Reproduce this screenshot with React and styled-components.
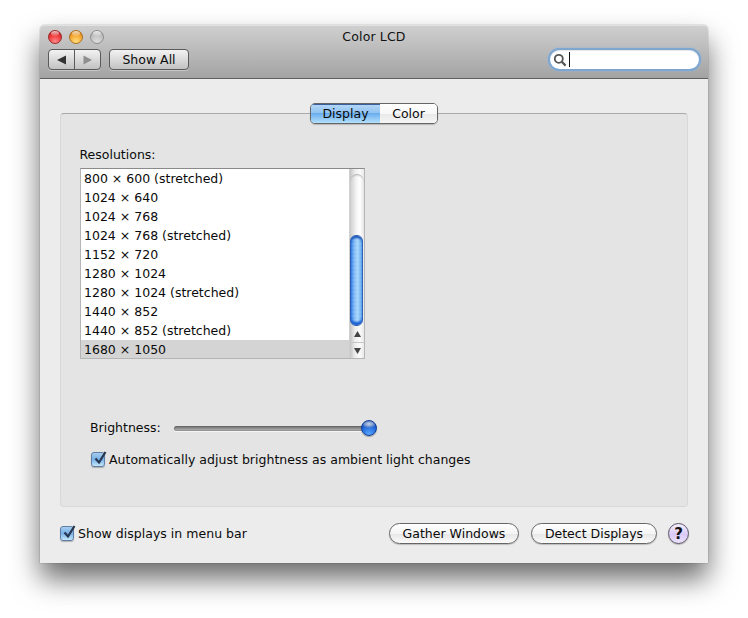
import React from 'react';
import styled, { createGlobalStyle } from 'styled-components';

const Global = createGlobalStyle`
  html, body { margin: 0; padding: 0; background: #fff; }
  body { font-family: "DejaVu Sans", "Liberation Sans", sans-serif; font-size: 12.5px; color: #0a0a0a; }
`;
const Page = styled.div`
  width: 748px; height: 618px; padding: 25px 40px 0; box-sizing: border-box; overflow: hidden;
`;
const Window = styled.div`
  width: 668px; height: 538px; display: flex; flex-direction: column; background: #ececec;
  border-radius: 5px 5px 0 0;
  box-shadow: 0 0 1px rgba(0,0,0,.7), 0 16px 28px rgba(0,0,0,.58);
`;
const TitleBar = styled.div`
  height: 54px; flex: none; box-sizing: border-box; padding: 4px 8px 0;
  display: flex; flex-direction: column; gap: 6px;
  background: linear-gradient(#d0d0d0, #a3a3a3); border-bottom: 1px solid #5f5f5f;
  border-radius: 5px 5px 0 0; box-shadow: inset 0 1px 0 #e2e2e2;
`;
const TitleRow = styled.div`
  height: 14px; display: grid; grid-template-columns: 1fr auto 1fr; align-items: center;
`;
const Lights = styled.div` display: flex; gap: 7px; `;
const Light = styled.span`
  position: relative; width: 14px; height: 14px; border-radius: 50%; box-sizing: border-box;
  border: 1px solid ${p => p.$edge};
  background: radial-gradient(circle at 50% 90%, ${p => p.$glow} 0, ${p => p.$mid} 55%, ${p => p.$dark} 100%);
  &::before {
    content: ""; position: absolute; left: 2px; right: 2px; top: 0; height: 5px; border-radius: 50%;
    background: linear-gradient(rgba(255,255,255,.75), rgba(255,255,255,.1));
  }
`;
const Title = styled.div` font-size: 12.5px; color: #111; letter-spacing: .15px; `;
const ToolRow = styled.div` display: flex; align-items: center; gap: 8px; height: 21px; `;
const NavGroup = styled.div`
  display: flex; width: 53px; height: 21px; box-sizing: border-box; border: 1px solid #5a5a5a; border-radius: 4px;
  background: linear-gradient(#f3f3f3, #c2c2c2); box-shadow: 0 1px 0 rgba(255,255,255,.35);
`;
const NavCell = styled.div`
  flex: 1; display: flex; align-items: center; justify-content: center;
  & + & { border-left: 1px solid #5a5a5a; }
`;
const ToolButton = styled.button`
  width: 80px; height: 21px; padding: 0; box-sizing: border-box; border: 1px solid #5a5a5a; border-radius: 4px;
  background: linear-gradient(#f3f3f3, #c2c2c2); box-shadow: 0 1px 0 rgba(255,255,255,.35);
  font: inherit; color: #0a0a0a;
`;
const Search = styled.div`
  margin-left: auto; margin-right: -1px; width: 153px; height: 23px; box-sizing: border-box; padding-left: 3px;
  display: flex; align-items: center; gap: 2px; background: #fff; border-radius: 12px;
  border: 2px solid #7da7d1; box-shadow: 0 0 2px #8db5dc, inset 0 1px 1px rgba(0,0,0,.1);
`;
const Caret = styled.span` width: 1px; height: 15px; background: #111; `;
const Content = styled.div`
  flex: 1; display: flex; flex-direction: column; padding: 34px 20px 0;
`;
const Panel = styled.div`
  height: 394px; flex: none; box-sizing: border-box; background: #e4e4e4;
  border: 1px solid #d8d8d8; border-top-color: #a9a9a9; border-radius: 4px;
  display: flex; flex-direction: column;
`;
const Tabs = styled.div`
  align-self: center; margin-top: -11px; display: flex; width: 128px; height: 21px; box-sizing: border-box;
  border: 1px solid #666; border-radius: 5px; overflow: hidden; box-shadow: 0 1px 1px rgba(0,0,0,.2);
`;
const Tab = styled.div`
  display: flex; align-items: center; justify-content: center; flex: none; width: ${p => p.$w}px;
  background: ${p => p.$active
    ? 'linear-gradient(#b7d8f7 0, #8fc2f1 48%, #6aaef0 50%, #b4e0fb 100%)'
    : 'linear-gradient(#fff 0, #f7f7f7 50%, #e9e9e9 52%, #f5f5f5 100%)'};
  ${p => p.$active && 'box-shadow: inset 0 1px 0 #3b5f9a;'}
`;
const PanelBody = styled.div`
  flex: 1; display: flex; flex-direction: column; padding: 23px 19px 0 18.5px;
`;
const FieldLabel = styled.div` height: 16px; line-height: 16px; `;
const ListBox = styled.div`
  margin: 5px 0 0 .5px; width: 285px; height: 191px; box-sizing: border-box; display: flex; background: #fff;
  border: 1px solid #b5b5b5; border-top-color: #8a8a8a;
`;
const Rows = styled.div` flex: 1; overflow: hidden; `;
const Row = styled.div`
  height: 19px; line-height: 19px; padding-left: 3px; white-space: nowrap;
  ${p => p.$selected && 'background: #d4d4d4;'}
`;
const ScrollBar = styled.div`
  width: 15px; flex: none; display: flex; flex-direction: column; box-sizing: border-box;
  background: linear-gradient(90deg, #c4c4c4, #ededed 35%, #fbfbfb 70%, #e9e9e9);
  border-left: 1px solid #cfcfcf;
`;
const TrackCap = styled.div`
  margin-top: 5px; height: 61px; flex: none; border-radius: 7px 7px 0 0;
  background: linear-gradient(90deg, #cdcdcd, #f4f4f4 45%, #fff 70%, #e6e6e6);
  box-shadow: inset 0 2px 2px -1px #a8a8a8;
`;
const Thumb = styled.div`
  height: 91px; flex: none; width: 13px; border-radius: 6px; box-sizing: border-box; border: 1px solid #2f62b5;
  background: repeating-linear-gradient(0deg, rgba(255,255,255,.07) 0 2px, rgba(255,255,255,0) 2px 4px),
    linear-gradient(90deg, #2f7be3, #7fbaf6 30%, #a8d6fb 60%, #5da5ee 100%);
  box-shadow: inset 0 3px 2px -1px #1d55ba, inset 0 -4px 2px -1px #1b61d6;
`;
const Arrow = styled.div`
  height: 16px; flex: none; display: flex; align-items: center; justify-content: center;
  & + & { border-top: 1px solid #c6c6c6; height: 16px; }
`;
const BrightnessRow = styled.div`
  margin-top: 59px; margin-left: 10.5px; height: 18px; display: flex; align-items: center; gap: 13.5px;
`;
const Track = styled.div`
  position: relative; top: 1px; width: 194px; height: 5px; border-radius: 3px; background: linear-gradient(#666, #9a9a9a 60%, #bdbdbd);
  box-shadow: inset 0 0 0 1px rgba(90,90,90,.35), 0 1px 0 rgba(255,255,255,.6);
`;
const Knob = styled.div`
  position: absolute; right: -9px; top: -6px; width: 16px; height: 16px; border-radius: 50%; box-sizing: border-box;
  border: 1px solid #123f94; box-shadow: 0 1px 1px rgba(0,0,0,.3);
  background: radial-gradient(ellipse 7px 4px at 50% 3px, #c7d4ea 0, #6b8cca 70%, transparent 100%),
    radial-gradient(circle at 50% 95%, #5aa7ff 0, #1d63d6 60%, #0d3a9a 100%);
`;
const CheckRow = styled.label`
  display: flex; align-items: center; gap: 4px; height: 17px; white-space: nowrap; letter-spacing: .02px; margin: ${p => p.$m};
`;
const Box = styled.span`
  position: relative; width: 14px; height: 15px; flex: none; box-sizing: border-box; border: 1px solid #5f7ea3; border-radius: 3px;
  background: linear-gradient(#a7cdf0, #7ab1e6 45%, #7fb7ea 55%, #c4e6fb);
  box-shadow: 0 1px 1px rgba(0,0,0,.25);
`;
const Tick = styled.svg` position: absolute; left: 0; top: -3px; width: 16px; height: 16px; `;
const Footer = styled.div`
  margin: 15px -1px 0 0; height: 23px; display: flex; align-items: center;
`;
const Pill = styled.button`
  height: 21px; padding: 0; width: ${p => p.$w}px; margin-left: ${p => p.$ml}; box-sizing: border-box; flex: none;
  border: 1px solid #666; border-radius: 11px; font: inherit; color: #0a0a0a;
  background: linear-gradient(#fff, #f4f4f4 50%, #e6e6e6 52%, #fbfbfb);
  box-shadow: 0 1px 1px rgba(0,0,0,.2);
`;
const Help = styled.div`
  margin-left: 11px; width: 21px; height: 21px; flex: none; border-radius: 50%; box-sizing: border-box; border: 1px solid #5a5468;
  display: flex; align-items: center; justify-content: center; font-weight: 700; font-size: 15px; color: #111;
  background: linear-gradient(#f6f1fd, #d9c9f6 55%, #eee5fc);
  box-shadow: 0 1px 1px rgba(0,0,0,.25);
`;

const resolutions = ['800 × 600 (stretched)', '1024 × 640', '1024 × 768', '1024 × 768 (stretched)', '1152 × 720', '1280 × 1024', '1280 × 1024 (stretched)', '1440 × 852', '1440 × 852 (stretched)', '1680 × 1050'];

const Check = () => (
  <Box>
    <Tick viewBox="0 0 16 16"><path d="M3.5 8.5 L7 12.5 L13.5 2" fill="none" stroke="#26364f" strokeWidth="2.2" /></Tick>
  </Box>
);

export default function App() {
  return (
    <Page>
      <Global />
      <Window>
        <TitleBar>
          <TitleRow>
            <Lights>
              <Light $edge="#9c2a2a" $glow="#ff8a8a" $mid="#ee3a3a" $dark="#a81616" />
              <Light $edge="#a8701c" $glow="#ffdf80" $mid="#f6a832" $dark="#b8640c" />
              <Light $edge="#8e8e8e" $glow="#dedede" $mid="#c2c2c2" $dark="#a4a4a4" />
            </Lights>
            <Title>Color LCD</Title>
            <span />
          </TitleRow>
          <ToolRow>
            <NavGroup>
              <NavCell><svg width="12" height="10" viewBox="0 0 12 10"><path d="M1 5 L10 0.5 V9.5 Z" fill="#333" /></svg></NavCell>
              <NavCell><svg width="12" height="10" viewBox="0 0 12 10"><path d="M10 5 L1.5 0.5 V9.5 Z" fill="#8f8f8f" /></svg></NavCell>
            </NavGroup>
            <ToolButton>Show All</ToolButton>
            <Search>
              <svg width="14" height="14" viewBox="0 0 14 14"><circle cx="5.8" cy="5.8" r="4" fill="none" stroke="#555" strokeWidth="1.8" /><path d="M8.8 8.8 L12.6 12.6" stroke="#555" strokeWidth="2.2" /></svg>
              <Caret />
            </Search>
          </ToolRow>
        </TitleBar>
        <Content>
          <Panel>
            <Tabs>
              <Tab $w={69} $active>Display</Tab>
              <Tab $w={57}>Color</Tab>
            </Tabs>
            <PanelBody>
              <FieldLabel>Resolutions:</FieldLabel>
              <ListBox>
                <Rows>
                  {resolutions.map((r, i) => <Row key={r} $selected={i === 9}>{r}</Row>)}
                </Rows>
                <ScrollBar>
                  <TrackCap />
                  <Thumb />
                  <Arrow><svg width="9" height="8" viewBox="0 0 9 8"><path d="M4.5 1 L8 7 H1 Z" fill="#444" /></svg></Arrow>
                  <Arrow><svg width="9" height="8" viewBox="0 0 9 8"><path d="M4.5 7 L8 1 H1 Z" fill="#444" /></svg></Arrow>
                </ScrollBar>
              </ListBox>
              <BrightnessRow>
                <span>Brightness:</span>
                <Track><Knob /></Track>
              </BrightnessRow>
              <CheckRow $m="15px 0 0 11.5px"><Check />Automatically adjust brightness as ambient light changes</CheckRow>
            </PanelBody>
          </Panel>
          <Footer>
            <CheckRow $m="0"><Check />Show displays in menu bar</CheckRow>
            <Pill $w={130} $ml="auto">Gather Windows</Pill>
            <Pill $w={126} $ml="12px">Detect Displays</Pill>
            <Help>?</Help>
          </Footer>
        </Content>
      </Window>
    </Page>
  );
}
